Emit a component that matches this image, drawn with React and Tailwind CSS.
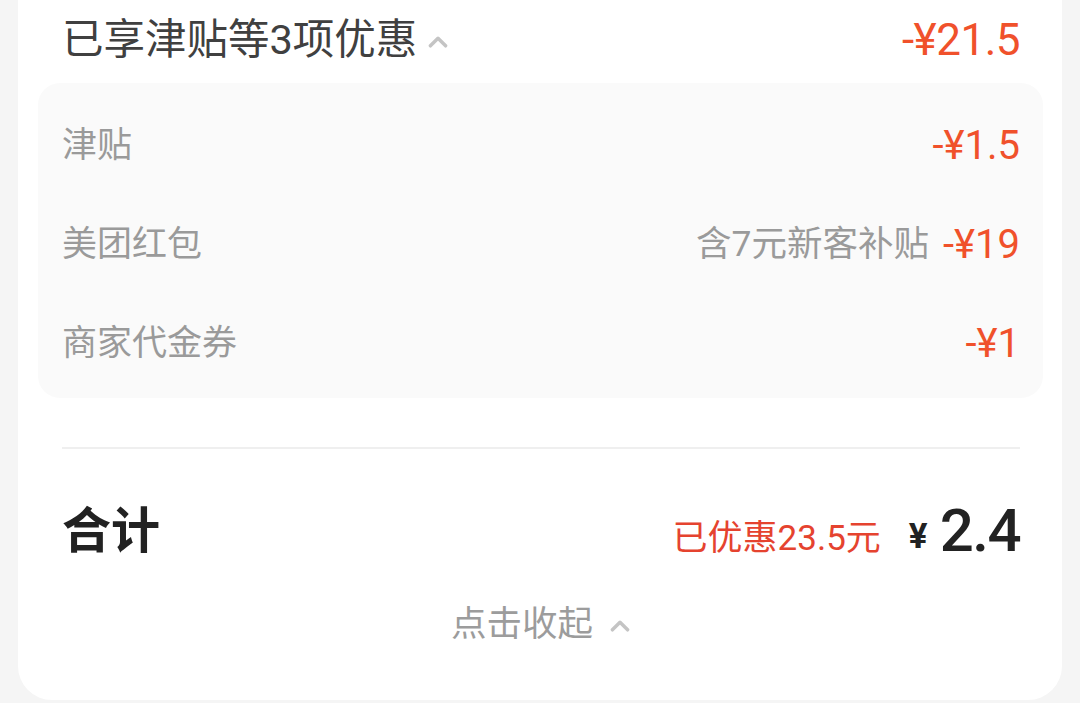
import React from 'react';

const FONT = { fontFamily: 'Roboto, "Noto Sans CJK SC", sans-serif' };

function ChevronUp({ className }) {
  return (
    <svg viewBox="0 0 20 12" className={className} fill="none">
      <path d="M3 10 L10 3 L17 10" stroke="currentColor" strokeWidth="3.2" strokeLinecap="round" strokeLinejoin="round" />
    </svg>
  );
}

const discounts = [
  { label: '津贴', note: '', amount: '1.5' },
  { label: '美团红包', note: '含7元新客补贴', amount: '19' },
  { label: '商家代金券', note: '', amount: '1' },
];

export default function App() {
  return (
    <div className="w-[1080px] h-[703px] bg-[#f5f5f5] overflow-hidden" style={FONT}>
      <div className="mx-[18px] bg-white rounded-b-[34px] pl-[44px] pr-[42px] pb-[47px]">
        {/* header */}
        <div className="h-[83px] flex items-center justify-between">
          <div className="flex items-center text-[41.5px] leading-none text-[#404040]">
            <span className="-mt-[4px]">已享津贴等3项优惠</span>
            <ChevronUp className="w-[22px] h-[13px] ml-[10px] text-[#c4c4c4]" />
          </div>
          <div className="text-[44px] leading-none text-[#f0512b] tracking-[-0.5px] -mt-[4px]">-¥21.5</div>
        </div>

        {/* detail box */}
        <div className="-ml-[24px] -mr-[23px] h-[315px] bg-[#fafafa] rounded-[22px] pl-[24px] pr-[23px] pt-[13px]">
          {discounts.map(d => (
            <div key={d.label} className="h-[99px] flex items-center justify-between">
              <span className="text-[35px] leading-none text-[#9a9a9a]">{d.label}</span>
              <div className="flex items-center">
                {d.note && <span className="text-[35.5px] leading-none text-[#9a9a9a] mr-[14px]">{d.note}</span>}
                <span className="text-[40px] leading-none text-[#f0512b]">-¥{d.amount}</span>
              </div>
            </div>
          ))}
        </div>

        <div className="mt-[49px] h-[2px] bg-[#efefef]" />

        {/* total */}
        <div className="mt-[32px] h-[100px] flex items-center justify-between">
          <span className="text-[49px] leading-none font-bold text-[#222]">合计</span>
          <div className="flex items-center">
            <span className="text-[35px] leading-none text-[#e5432f] mr-[28px] mt-[14px]">已优惠23.5元</span>
            <span className="text-[35px] leading-none font-bold text-[#222] mr-[12px] mt-[10px]">¥</span>
            <span className="text-[60px] leading-none font-medium text-[#222] tracking-[-1.5px]">2.4</span>
          </div>
        </div>

        {/* collapse */}
        <div className="mt-[16px] h-[56px] flex items-center justify-center text-[35.5px] leading-none text-[#9c9c9c]">
          <span>点击收起</span>
          <ChevronUp className="w-[22px] h-[13px] ml-[16px] text-[#c4c4c4]" />
        </div>
      </div>
    </div>
  );
}
